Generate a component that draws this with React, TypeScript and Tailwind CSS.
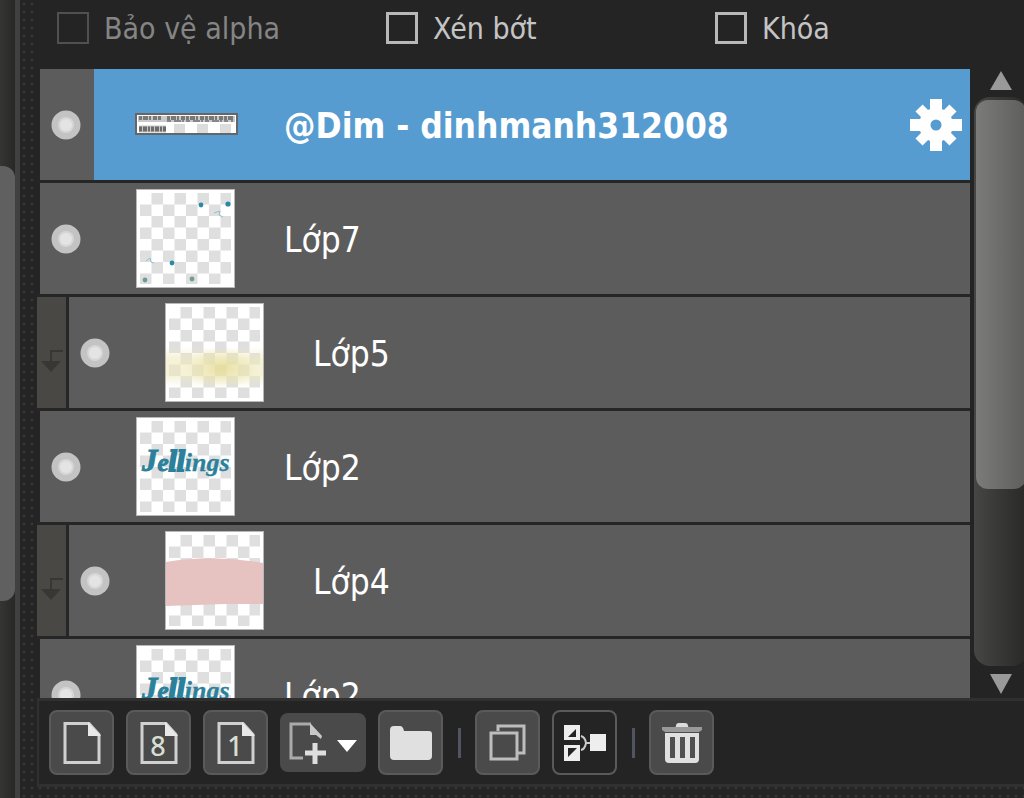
import React from 'react';

type Art = 'caption' | 'dots' | 'glow' | 'lettering' | 'band';

interface Layer {
  id: number;
  name: string;
  art: Art;
  clipped?: boolean;
  selected?: boolean;
}

const layers: Layer[] = [
  { id: 1, name: '@Dim - dinhmanh312008', art: 'caption', selected: true },
  { id: 2, name: 'Lớp7', art: 'dots' },
  { id: 3, name: 'Lớp5', art: 'glow', clipped: true },
  { id: 4, name: 'Lớp2', art: 'lettering' },
  { id: 5, name: 'Lớp4', art: 'band', clipped: true },
  { id: 6, name: 'Lớp2', art: 'lettering' },
];

const options = [
  { id: 'alpha', label: 'Bảo vệ alpha', disabled: true },
  { id: 'clip', label: 'Xén bớt', disabled: false },
  { id: 'lock', label: 'Khóa', disabled: false },
];

const Thumbnail: React.FC<{ art: Art; uid: string }> = ({ art, uid }) => {
  if (art === 'caption') {
    return (
      <svg width="103" height="24" viewBox="0 0 103 24" className="-ml-px" aria-hidden="true">
        <rect x="1" y="1" width="101" height="20" fill="#fff" stroke="#666" strokeWidth="2" />
        <path d="M39 11h11v9H39zM62 11h11v9H62zM85 11h11v9H85z" fill="#dcdcdc" />
        <path d="M3 3h97v6H3z" fill="#c9c9c9" />
        <path d="M4 5h22M32 5h66" stroke="#666" strokeWidth="4" strokeDasharray="3 1 5 1 2 2 4 1" opacity="0.8" />
        <path d="M32 8h66" stroke="#777" strokeWidth="2" strokeDasharray="4 3 7 1 2 2" opacity="0.8" />
        <path d="M4 16h27" stroke="#777" strokeWidth="7" opacity="0.4" />
        <path d="M4 16h27" stroke="#444" strokeWidth="5" strokeDasharray="3 1 4 1 2 1" opacity="0.7" />
      </svg>
    );
  }
  return (
    <svg width="99" height="99" viewBox="0 0 99 99" aria-hidden="true">
      <defs>
        <pattern id={`${uid}-check`} x="4" y="4" width="23" height="23" patternUnits="userSpaceOnUse">
          <rect width="23" height="23" fill="#fff" />
          <path d="M11.5 0H23v11.5H11.5zM0 11.5h11.5V23H0z" fill="#dfdfdf" />
        </pattern>
        <radialGradient id={`${uid}-glow`}>
          <stop offset="0" stopColor="#e3d98c" stopOpacity="0.7" />
          <stop offset="1" stopColor="#e8e0a0" stopOpacity="0" />
        </radialGradient>
        <linearGradient id={`${uid}-fade`} x1="0" y1="0" x2="0" y2="1">
          <stop offset="0" stopColor="#efe9bd" stopOpacity="0" />
          <stop offset="0.3" stopColor="#efe9bd" stopOpacity="0.6" />
          <stop offset="0.7" stopColor="#efe9bd" stopOpacity="0.6" />
          <stop offset="1" stopColor="#efe9bd" stopOpacity="0" />
        </linearGradient>
      </defs>
      <rect width="99" height="99" fill="#b8b8b8" />
      <rect x="1" y="1" width="97" height="97" fill="#fff" />
      <rect x="4" y="4" width="91" height="91" fill={`url(#${uid}-check)`} />
      {art === 'dots' && (
        <g fill="#2b8aa3">
          <circle cx="65" cy="16" r="2.4" />
          <circle cx="92" cy="15" r="2.6" />
          <circle cx="36" cy="74" r="2.4" />
          <circle cx="9" cy="91" r="2.4" fill="#6f9c98" />
          <circle cx="56" cy="90" r="2.4" fill="#6f9c98" />
          <path d="M78 24l6-2-1 4 4 2M10 72l4-3 1 4 3 1" fill="none" stroke="#8fc0cb" />
        </g>
      )}
      {art === 'glow' && (
        <>
          <rect x="1" y="44" width="97" height="40" fill={`url(#${uid}-fade)`} />
          <ellipse cx="57" cy="65" rx="38" ry="21" fill={`url(#${uid}-glow)`} />
        </>
      )}
      {art === 'band' && <path d="M1 31Q49 23 98 32V73H60L1 75z" fill="#e6c3c0" />}
      {art === 'lettering' && (
        <text
          x="6"
          y="54"
          fill="#2b819b"
          stroke="#2b819b"
          strokeWidth="1"
          fontFamily="Liberation Serif, serif"
          fontWeight="700"
          fontStyle="italic"
        >
          <tspan fontSize="31">J</tspan>
          <tspan fontSize="25">e</tspan>
          <tspan fontSize="29" strokeWidth="2">
            ll
          </tspan>
          <tspan fontSize="26" strokeWidth="0.3">
            ings
          </tspan>
        </text>
      )}
    </svg>
  );
};

const GearIcon = () => (
  <svg width="52" height="52" viewBox="0 0 52 52" aria-hidden="true">
    <g fill="#fff">
      <path d="M20 0h12v52H20z" />
      <path d="M20 0h12v52H20z" transform="rotate(90 26 26)" />
      <path d="M21 2h10v48H21z" transform="rotate(45 26 26)" />
      <path d="M21 2h10v48H21z" transform="rotate(135 26 26)" />
      <circle cx="26" cy="26" r="17" />
    </g>
    <circle cx="26" cy="26" r="5.5" fill="#569cd1" />
  </svg>
);

const EyeDot = () => (
  <svg width="30" height="30" viewBox="0 0 30 30" aria-hidden="true">
    <circle cx="15" cy="15" r="14.5" fill="#c3c3c3" />
    <circle cx="15" cy="15" r="8" fill="#d6d6d6" />
    <circle cx="15" cy="15" r="6" fill="#e4e4e4" />
  </svg>
);

const ClipArrow = () => (
  <svg width="24" height="24" viewBox="0 0 24 24" fill="none" stroke="#383735" strokeWidth="2" aria-hidden="true">
    <path d="M23 2H11v12" />
    <path d="M1 12h20L11 23z" fill="#383735" stroke="none" />
  </svg>
);

const PageIcon: React.FC<{ digit?: string }> = ({ digit }) => (
  <svg width="38" height="42" viewBox="0 0 38 42" aria-hidden="true">
    <path d="M2 1.5h24l10 11V40.500H2z" fill="none" stroke="#d0d0d0" strokeWidth="3" />
    <path d="M25 0l13 14H25z" fill="#e8e8e8" />
    {digit && (
      <text x="18" y="34" textAnchor="middle" fontSize="27" fontWeight="500" fill="#d7dfd2" fontFamily="Noto Sans, sans-serif">
        {digit}
      </text>
    )}
  </svg>
);

const AddPageIcon = () => (
  <svg width="68" height="42" viewBox="0 0 68 42" aria-hidden="true">
    <path d="M14 36H2V2h20" fill="none" stroke="#aaa" strokeWidth="3" />
    <path d="M21 1l12 13-1 3-5-4h-6z" fill="#c8c8c8" />
    <path d="M26 21v21M16 31h21" stroke="#dedede" strokeWidth="5" />
    <path d="M48 18h20L58 30z" fill="#fff" />
  </svg>
);

const FolderIcon = () => (
  <svg width="42" height="36" viewBox="0 0 42 36" aria-hidden="true">
    <path d="M0 5q0-4 4-4h6q3 0 4 5h25q3 0 3 3v22q0 4-4 4H4q-4 0-4-4z" fill="#e0e0e0" />
  </svg>
);

const CopyIcon = () => (
  <svg width="37" height="37" viewBox="0 0 37 37" fill="none" stroke="#bdbdbd" strokeWidth="3" aria-hidden="true">
    <path d="M9 7V2h26v27h-6" />
    <path d="M2 9h26v26H2z" />
  </svg>
);

const MergeIcon = () => (
  <svg width="42" height="38" viewBox="0 0 42 38" aria-hidden="true">
    <path d="M0 1h16v15H0zM0 21h16v16H0zM26 10h16v17H26z" fill="#eee" />
    <path d="M12 5v8H4zM4 24h9l-9 9z" fill="#242424" />
    <path d="M17 12q4 1 5 7h4M17 26q4-1 5-7" fill="none" stroke="#ccc" strokeWidth="2" />
  </svg>
);

const TrashIcon = () => (
  <svg width="40" height="42" viewBox="0 0 40 42" aria-hidden="true">
    <path d="M14 4q0-3 3-3h6q3 0 3 3l1 2H13z" fill="#dcdcdc" />
    <path d="M0 5h40v3l-3 2H3L0 8z" fill="#999" />
    <path d="M3 11h34v26q0 4-4 4H7q-4 0-4-4z" fill="#e0e0e0" />
    <path d="M8 15h5v21H8zM18 15h5v21h-5zM28 15h5v21h-5z" fill="#505050" />
  </svg>
);

interface ToolButtonProps {
  label: string;
  children: React.ReactNode;
  active?: boolean;
}

const ToolButton: React.FC<ToolButtonProps> = ({ label, children, active }) => (
  <button
    aria-label={label}
    className={`flex h-[65px] w-[65px] shrink-0 items-center justify-center rounded-lg border-2 border-[#5a5a5a] ${
      active ? 'bg-[#242424]' : 'bg-[#4a4a4a]'
    }`}
  >
    {children}
  </button>
);

const ToolDivider = () => (
  <div className="flex w-2 shrink-0 justify-center">
    <div className="h-[30px] w-[3px] bg-[#50555f]" />
  </div>
);

const LayerRow: React.FC<{ layer: Layer }> = ({ layer }) => (
  <li className="flex h-[114px] shrink-0 border-b-[3px] border-[#262626]">
    {layer.clipped ? (
      <div className="flex w-8 shrink-0 items-center justify-center border-r-[3px] border-[#262626] bg-[#4a4845] pt-4">
        <ClipArrow />
      </div>
    ) : (
      <div className="w-[3px] shrink-0" />
    )}
    <button
      aria-label={`Hiện ${layer.name}`}
      className="flex w-[54px] shrink-0 items-center justify-center bg-[#5c5c5c] pr-0.5"
    >
      <EyeDot />
    </button>
    <div className={`flex min-w-0 flex-1 items-center pr-2 ${layer.selected ? 'bg-[#569cd1]' : 'bg-[#5c5c5c]'}`}>
      <div className="flex w-[190px] shrink-0 pl-[42px]">
        <Thumbnail art={layer.art} uid={`layer-${layer.id}`} />
      </div>
      <span className={`flex-1 truncate pt-0.5 text-[35px] leading-[48px] text-white ${layer.selected ? 'font-bold' : ''}`}>
        {layer.name}
      </span>
      {layer.selected && (
        <button aria-label="Cài đặt lớp" className="shrink-0">
          <GearIcon />
        </button>
      )}
    </div>
  </li>
);

export default function App() {
  return (
    <div className="flex h-screen overflow-hidden bg-[#242424] font-['DejaVu_Sans_Condensed','DejaVu_Sans',sans-serif]">
      {/* Scrollbar of the neighbouring panel */}
      <div className="flex w-[15px] shrink-0 flex-col bg-linear-to-r from-[#353533] to-[#282827] pt-[166px]">
        <div className="h-[435px] rounded-r-xl bg-[#606060]" />
      </div>
      <div className="w-[5px] shrink-0 bg-[#404040]" />

      <div className="flex min-w-0 flex-1 flex-col bg-[radial-gradient(circle_at_center,#343434_1px,transparent_2px)] bg-[length:8px_8px] pl-[17px]">
        <div className="flex min-h-0 flex-1 flex-col bg-[#242424]">
          <div className="grid h-[69px] shrink-0 grid-cols-[329px_329px_1fr] pt-3 pl-5">
            {options.map((option) => (
              <div key={option.id} className="flex h-8 items-center gap-[15px]">
                <input
                  id={option.id}
                  type="checkbox"
                  disabled={option.disabled}
                  className="h-8 w-8 appearance-none border-[3px] border-[#b8b8b8] disabled:border-2 disabled:border-[#505050]"
                />
                <label
                  htmlFor={option.id}
                  className={`pt-0.5 text-[30px] leading-8 whitespace-nowrap ${option.disabled ? 'text-[#858585]' : 'text-[#c4c4c4]'}`}
                >
                  {option.label}
                </label>
              </div>
            ))}
          </div>

          <div className="flex min-h-0 flex-1">
            <ul className="flex min-w-0 flex-1 flex-col overflow-hidden">
              {layers.map((layer) => (
                <LayerRow key={layer.id} layer={layer} />
              ))}
            </ul>

            {/* Scrollbar, runs slightly past the window edge */}
            <div className="-mr-1 flex w-[58px] shrink-0 flex-col items-center pl-1">
              <svg width="22" height="28" viewBox="0 0 22 28" aria-hidden="true">
                <path d="M11 2L22 21H0z" fill="#999" />
              </svg>
              <div className="w-full flex-1 rounded-2xl bg-linear-to-r from-[#464644] to-[#282826] px-0.5 pt-[3px]">
                <div className="h-[389px] rounded-xl bg-linear-to-r from-[#7b7b79] to-[#5e5e5c]" />
              </div>
              <svg width="22" height="32" viewBox="0 0 22 32" aria-hidden="true">
                <path d="M0 8h22L11 28z" fill="#999" />
              </svg>
            </div>
          </div>

          <div className="flex h-[89px] shrink-0 items-center gap-3 border-y-[3px] border-l-2 border-[#303030] bg-[#242424] pl-2.5">
            <ToolButton label="Lớp mới">
              <PageIcon />
            </ToolButton>
            <ToolButton label="Lớp 8 bit mới">
              <PageIcon digit="8" />
            </ToolButton>
            <ToolButton label="Lớp 1 bit mới">
              <PageIcon digit="1" />
            </ToolButton>
            <button
              aria-label="Thêm lớp"
              className="flex h-[59px] w-[86px] shrink-0 items-center justify-center rounded-lg bg-[#4a4a4a]"
            >
              <AddPageIcon />
            </button>
            <ToolButton label="Thư mục mới">
              <FolderIcon />
            </ToolButton>
            <ToolDivider />
            <ToolButton label="Nhân đôi lớp">
              <CopyIcon />
            </ToolButton>
            <ToolButton label="Gộp lớp" active>
              <MergeIcon />
            </ToolButton>
            <ToolDivider />
            <ToolButton label="Xóa lớp">
              <TrashIcon />
            </ToolButton>
          </div>
        </div>
        <div className="h-[11px] shrink-0" />
      </div>
    </div>
  );
}
